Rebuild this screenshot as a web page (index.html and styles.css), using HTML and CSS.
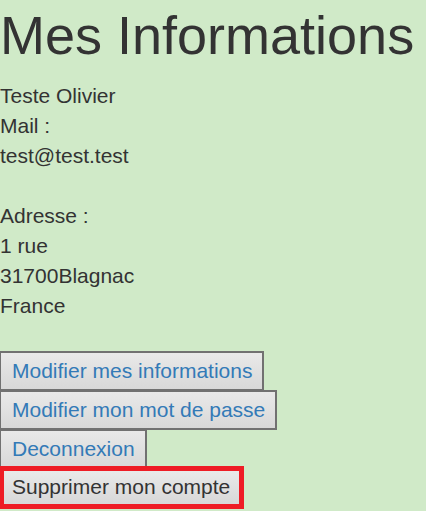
FILE: index.html
```html
<!DOCTYPE html>
<html lang="fr">
<head>
<meta charset="utf-8">
<title>Mes Informations</title>
<link rel="stylesheet" href="styles.css">
</head>
<body>
<h1 class="title">Mes Informations</h1>
<p class="info">Teste Olivier<br>Mail :<br>test@test.test<br><br>Adresse :<br>1 rue<br>31700Blagnac<br>France</p>
<div class="actions">
  <button class="btn">Modifier mes informations</button>
  <button class="btn">Modifier mon mot de passe</button>
  <button class="btn">Deconnexion</button>
  <button class="btn btn-danger">Supprimer mon compte</button>
</div>
</body>
</html>
```

FILE: styles.css
```css
html, body {
  margin: 0;
  padding: 0;
  background: #d0eac8;
}
body {
  font-family: "Liberation Sans", Arial, sans-serif;
  font-size: 21px;
  color: #333333;
  overflow: hidden;
}
.title {
  margin: 4px 0 15px 0;
  font-size: 54px;
  font-weight: normal;
  line-height: 62px;
  color: #333333;
}
.info {
  margin: 0 0 30px 0;
  line-height: 30px;
}
.actions {
  display: flex;
  flex-direction: column;
  align-items: flex-start;
}
.btn {
  margin: -1px 0 0 -1px;
  padding: 6px 10px 6px 11px;
  font-family: "Liberation Sans", Arial, sans-serif;
  font-size: 21px;
  line-height: 24px;
  color: #337ab7;
  background: linear-gradient(#e9e9e9, #d8d8d8);
  border: 2px solid #717171;
  border-radius: 0;
}
.btn:first-child {
  margin-top: 0;
}
.btn-danger {
  margin-top: -3px;
  padding: 4px 9px 5px 8px;
  color: #333333;
  border: 5px solid #ee1c25;
}
```
